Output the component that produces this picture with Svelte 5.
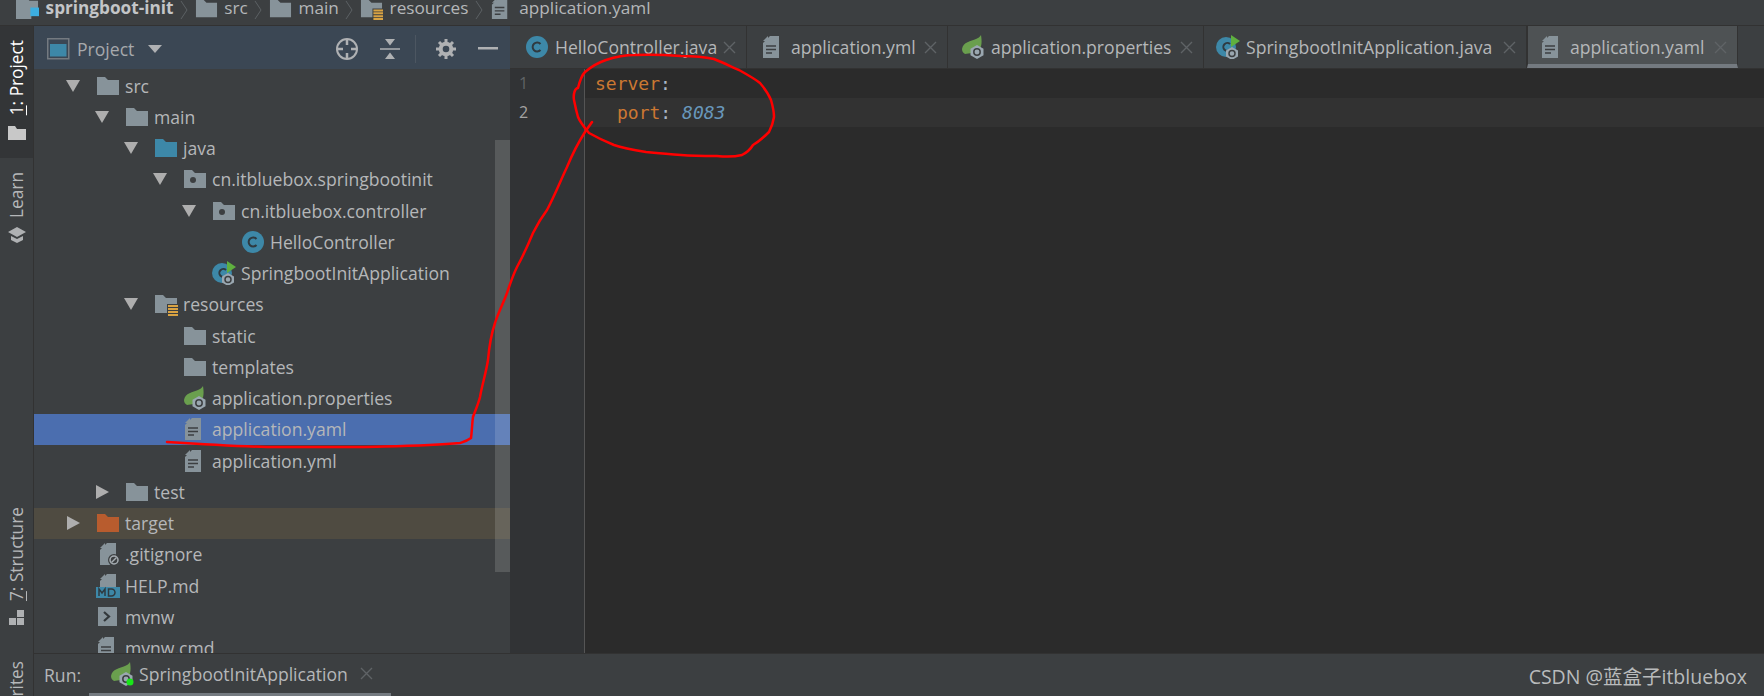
<script>
  const rows = [
    { label: 'src', depth: 0, arrow: 'down', icon: 'folder' },
    { label: 'main', depth: 1, arrow: 'down', icon: 'folder' },
    { label: 'java', depth: 2, arrow: 'down', icon: 'java' },
    { label: 'cn.itbluebox.springbootinit', depth: 3, arrow: 'down', icon: 'package' },
    { label: 'cn.itbluebox.controller', depth: 4, arrow: 'down', icon: 'package' },
    { label: 'HelloController', depth: 5, icon: 'class' },
    { label: 'SpringbootInitApplication', depth: 4, icon: 'boot' },
    { label: 'resources', depth: 2, arrow: 'down', icon: 'resources' },
    { label: 'static', depth: 3, icon: 'folder' },
    { label: 'templates', depth: 3, icon: 'folder' },
    { label: 'application.properties', depth: 3, icon: 'leaf' },
    { label: 'application.yaml', depth: 3, icon: 'file', state: 'selected' },
    { label: 'application.yml', depth: 3, icon: 'file' },
    { label: 'test', depth: 1, arrow: 'right', icon: 'folder' },
    { label: 'target', depth: 0, arrow: 'right', icon: 'target', state: 'excluded' },
    { label: '.gitignore', depth: 0, icon: 'ignore' },
    { label: 'HELP.md', depth: 0, icon: 'md' },
    { label: 'mvnw', depth: 0, icon: 'shell' },
    { label: 'mvnw.cmd', depth: 0, icon: 'file' }
  ];

  const tabs = [
    { label: 'HelloController.java', icon: 'class', width: 237, pad: 15 },
    { label: 'application.yml', icon: 'file', width: 201, pad: 14 },
    { label: 'application.properties', icon: 'leaf', width: 256, pad: 13 },
    { label: 'SpringbootInitApplication.java', icon: 'boot', width: 323, pad: 12 },
    { label: 'application.yaml', icon: 'file', width: 211, pad: 12, active: true }
  ];

  const crumbs = [
    { label: 'src', icon: 'folder' },
    { label: 'main', icon: 'folder' },
    { label: 'resources', icon: 'resources' },
    { label: 'application.yaml', icon: 'file' }
  ];
</script>

{#snippet icon(name)}
  <svg class="icon" width="24" height="24" viewBox="0 0 24 24">
    {#if name === 'folder' || name === 'java' || name === 'target' || name === 'package' || name === 'resources'}
      <path class={name} d="M1 3h8l3 3h11v15H1z" />
      {#if name === 'package'}<circle cx="10" cy="13" r="3" fill="#3c3f41" />{/if}
      {#if name === 'resources'}
        <rect x="13" y="12" width="11" height="12" fill="#3c3f41" />
        <path d="M14 14h10M14 17h10M14 20h10M14 23h10" stroke="#d9a343" stroke-width="2" />
      {/if}
    {:else if name === 'class'}
      <circle cx="12" cy="12" r="11" fill="#3d88a8" />
      <path d="M15.5 9a4.5 4.5 0 1 0 0 6" fill="none" stroke="#2f3a40" stroke-width="2" />
    {:else if name === 'boot'}
      <circle cx="10" cy="12" r="10" fill="#3d88a8" />
      <path d="M14 9a4 4 0 1 0 0 6" fill="none" stroke="#2f3a40" stroke-width="2" />
      <path d="M15 0l9 6-9 6z" fill="#5fb03f" />
      <path d="M16 12l6 3.5v6L16 25l-6-3.5v-6z" fill="#9aa7b0" />
      <circle cx="16" cy="18.5" r="3" fill="none" stroke="#3c3f41" stroke-width="1.5" />
    {:else if name === 'leaf' || name === 'leafrun'}
      <path d="M1 14C2 7 10 6 15 4c2-1 4-2 5-4 1 6 1 12-2 15-4 4-10 3-14 4-2-1-3-3-3-5z" fill="#6a9f4e" />
      <path d="M16 10l6.5 3.7v6.6L16 24l-6.500-3.700v-6.600z" fill="#9aa7b0" />
      <circle cx="16" cy="17" r="3.200" fill="none" stroke="#3c3f41" stroke-width="1.500" />
      {#if name === 'leafrun'}<circle cx="20" cy="20" r="3.500" fill="#19e619" />{/if}
    {:else if name === 'file'}
      <path d="M9 1h9v22H2V8z" fill="#87939a" />
      <path d="M2 6l5-5v5z" fill="#87939a" />
      <path d="M5 11h10M5 14.500h10M5 18h6" stroke="#3c3f41" stroke-width="1.500" />
    {:else if name === 'ignore'}
      <path d="M11 1h9v22H4V8z" fill="#87939a" />
      <path d="M4 6l5-5v5z" fill="#87939a" />
      <circle cx="18" cy="18" r="6" fill="#3c3f41" />
      <circle cx="18" cy="18" r="4" fill="none" stroke="#a6adb2" stroke-width="1.500" />
      <path d="M15.500 20.500l5-5" stroke="#a6adb2" stroke-width="1.500" />
    {:else if name === 'md'}
      <path d="M11 0h9v14H4V7z" fill="#87939a" />
      <path d="M4 5l5-5v5z" fill="#87939a" />
      <rect x="0" y="13" width="24" height="11" fill="#3d88a8" />
      <path d="M3 22v-7l3 4 3-4v7M12.500 15v7h3a3.500 3.500 0 0 0 0-7z" fill="none" stroke="#2f3a40" stroke-width="1.500" />
    {:else if name === 'shell'}
      <rect x="2" y="2" width="19" height="19" fill="#87939a" />
      <path d="M8 7l5 4.500L8 16" fill="none" stroke="#33383b" stroke-width="2.200" />
    {/if}
  </svg>
{/snippet}

{#snippet close()}
  <svg class="close" width="13" height="13" viewBox="0 0 13 13">
    <path d="M1 1l11 11M12 1L1 12" stroke="#5f6366" stroke-width="1.400" />
  </svg>
{/snippet}

<div class="app">
  <nav class="crumbs">
    <svg class="icon" width="24" height="24" viewBox="0 0 24 24">
      <path d="M0 0h11l3 4h9v14h-7v5H0z" fill="#87939a" />
      <rect x="15" y="11" width="9" height="9" fill="#3caee0" />
    </svg>
    <b>springboot-init</b>
    {#each crumbs as c}
      <svg class="chevron" width="8" height="20" viewBox="0 0 8 20"><path d="M1 1l6 9-6 9" fill="none" stroke="#5c6164" /></svg>
      {@render icon(c.icon)}
      <span>{c.label}</span>
    {/each}
  </nav>

  <div class="main">
    <aside class="strip">
      <div class="side active">
        <span class="vert"><u>1</u>: Project</span>
        <svg width="18" height="14" viewBox="0 0 18 14"><path d="M0 0h7l2 3h9v11H0z" fill="#c8c8c8" /></svg>
      </div>
      <div class="side learn">
        <span class="vert">Learn</span>
        <svg width="18" height="16" viewBox="0 0 18 16"><path d="M9 0l9 5-9 5-9-5zM3 9l6 3 6-3v4l-6 3-6-3z" fill="#afb1b3" /></svg>
      </div>
      <div class="side structure">
        <span class="vert"><u>7</u>: Structure</span>
        <svg width="16" height="15" viewBox="0 0 16 15"><path d="M8 0h7v7H8zM0 8h7v7H0zM8 8h7v7H8z" fill="#afb1b3" /></svg>
      </div>
      <div class="side favorites">
        <span class="vert"><u>2</u>: Favorites</span>
      </div>
    </aside>

    <div class="work">
      <div class="panes">
        <section class="project">
          <header>
            <svg class="window" width="24" height="22" viewBox="0 0 24 22">
              <rect x="0.750" y="0.750" width="21" height="20" fill="none" stroke="#747a80" stroke-width="1.500" />
              <rect x="3" y="6" width="16.500" height="12.500" fill="#3d88a8" />
            </svg>
            <span class="title">Project</span>
            <svg width="14" height="8" viewBox="0 0 14 8"><path d="M0 0h14L7 8z" fill="#afb1b3" /></svg>
            <svg class="locate" width="24" height="24" viewBox="0 0 24 24">
              <circle cx="12" cy="12" r="10" fill="none" stroke="#afb1b3" stroke-width="2" />
              <path d="M12 2v6M12 16v6M2 12h6M16 12h6" stroke="#afb1b3" stroke-width="2.500" />
            </svg>
            <svg class="collapse" width="20" height="20" viewBox="0 0 20 20">
              <path d="M0 10h20" stroke="#afb1b3" stroke-width="1.500" />
              <path d="M5 0h10l-5 6.500zM5 20h10l-5-6.500z" fill="#afb1b3" />
            </svg>
            <i class="sep"></i>
            <svg class="gear" width="20" height="20" viewBox="0 0 20 20">
              <circle cx="10" cy="10" r="5.300" fill="none" stroke="#afb1b3" stroke-width="4" />
              <path d="M10 0v20M0 10h20M3 3l14 14M17 3L3 17" stroke="#afb1b3" stroke-width="3" stroke-dasharray="3.500 13" />
            </svg>
            <svg class="hide" width="20" height="3" viewBox="0 0 20 3"><rect width="20" height="2.500" fill="#afb1b3" /></svg>
          </header>
          <div class="tree">
            {#each rows as r}
              <div class="row {r.state ?? ''}" style="padding-left: {32 + r.depth * 29}px">
                <span class="arrow">
                  {#if r.arrow === 'down'}
                    <svg width="14" height="12" viewBox="0 0 14 12"><path d="M0 0h14L7 12z" fill="#aeaeae" /></svg>
                  {:else if r.arrow === 'right'}
                    <svg width="13" height="14" viewBox="0 0 13 14"><path d="M0 0l13 7-13 7z" fill="#aeaeae" /></svg>
                  {/if}
                </span>
                {@render icon(r.icon)}
                <span class="label">{r.label}</span>
              </div>
            {/each}
          </div>
          <div class="scrollbar"></div>
        </section>

        <section class="editor">
          <div class="tabs">
            {#each tabs as t}
              <div class="tab" class:active={t.active} style="width: {t.width}px; padding-left: {t.pad}px">
                {@render icon(t.icon)}
                <span class="label">{t.label}</span>
                {@render close()}
              </div>
            {/each}
          </div>
          <div class="code">
            <div class="gutter">
              <div>1</div>
              <div class="current">2</div>
            </div>
            <div class="lines">
              <div class="line"><span class="key">server</span>:</div>
              <div class="line caret"><span class="key">port</span>: <em>8083</em></div>
            </div>
          </div>
        </section>
      </div>

      <footer class="runbar">
        <span class="run">Run:</span>
        <div class="runtab">
          {@render icon('leafrun')}
          <span class="label">SpringbootInitApplication</span>
          {@render close()}
        </div>
        <span class="mark">CSDN @蓝盒子itbluebox</span>
      </footer>
    </div>
  </div>

  <!-- hand drawn red annotation over the screenshot -->
  <svg class="ink" width="1764" height="696" viewBox="0 0 1764 696">
    <path d="M574 100C573 94 575 88 578 88C580 80 583 74 585 72C592 66 600 62 606 60C618 56 626 55 635 55C655 54 668 55 681 56C695 56 705 57 714 59C724 63 732 67 739 70C748 75 755 79 760 83C766 90 769 95 771 100C773 107 774 112 774 117C773 124 771 128 769 132C763 138 758 142 753 145C750 150 746 153 742 155C734 157 726 157 717 156C705 156 693 156 681 155C668 154 657 153 646 152C634 150 623 148 614 145C604 141 596 137 589 133C584 127 580 122 578 117C576 110 575 105 574 100" />
    <path d="M592 122L585 132C578 143 572 155 567 167C560 182 554 197 547 210C541 218 537 225 533 233C528 245 523 256 517 267C513 275 510 284 507 293C503 304 498 313 495 323C491 335 489 348 488 360C486 373 482 385 480 397C478 405 475 411 473 417C472 424 472 431 471 438C467 441 463 442 460 443C430 446 400 446 360 447C320 447 290 447 267 447C230 446 198 444 167 442" />
  </svg>
</div>

<style>
  :global(body) { margin: 0; background: #3c3f41; }

  .app {
    position: relative;
    width: 1764px;
    height: 696px;
    overflow: hidden;
    display: flex;
    flex-direction: column;
    background: #3c3f41;
    color: #b5b7b9;
    font-family: "Open Sans", "Noto Sans", "Noto Sans CJK SC", sans-serif;
    font-size: 17.6px;
  }

  svg { display: block; flex: none; }

  /* icon fills */
  .folder, .package, .resources { fill: #87939a; }
  .java { fill: #3d88a8; }
  .target { fill: #b85c2e; }

  .crumbs {
    height: 26px;
    flex: none;
    box-sizing: border-box;
    border-bottom: 1px solid #323232;
    display: flex;
    align-items: flex-end;
    padding: 0 0 8px 16px;
    gap: 6.6px;
    font-size: 17.2px;
    line-height: 19px;
    overflow: hidden;
    white-space: nowrap;
  }
  .crumbs b { color: #c3c5c7; font-weight: 700; }
  .crumbs .icon { width: 23px; height: 23px; margin-bottom: -3px; }
  .crumbs .chevron { margin-bottom: -3px; }

  .main { flex: 1; display: flex; min-height: 0; }

  .strip {
    width: 33px;
    flex: none;
    border-right: 1px solid #323232;
    overflow: hidden;
  }
  .side {
    display: flex;
    flex-direction: column;
    align-items: center;
    gap: 9px;
    line-height: 20px;
  }
  .vert {
    writing-mode: vertical-rl;
    transform: rotate(180deg);
    white-space: nowrap;
    font-size: 17.3px;
  }
  .side.active { height: 132px; box-sizing: border-box; padding-top: 14px; gap: 11px; background: #333537; color: #fff; }
  .side.learn { margin-top: 14px; }
  .side.structure { margin-top: 264px; }
  .side.favorites { margin-top: 36px; }

  .work { flex: 1; display: flex; flex-direction: column; min-width: 0; }
  .panes { flex: 1; display: flex; min-height: 0; }

  .project {
    position: relative;
    width: 476px;
    flex: none;
    display: flex;
    flex-direction: column;
    overflow: hidden;
  }
  .project header {
    height: 43px;
    flex: none;
    box-sizing: border-box;
    padding: 2px 0 0 13px;
    background: #3b4754;
    display: flex;
    align-items: center;
  }
  .title { margin: 0 14px 0 6px; color: #a6a9ac; }
  .locate { margin-left: 173px; }
  .collapse { margin-left: 21px; }
  .sep { width: 1px; height: 28px; background: #4c5661; margin-left: 15px; }
  .gear { margin-left: 20px; }
  .hide { margin-left: 22px; }

  .tree { padding-top: 1px; }
  .row {
    height: 31.25px;
    display: flex;
    align-items: center;
    white-space: nowrap;
  }
  .row.selected { background: #4b6eaf; }
  .row.excluded { background: #4f4b41; }
  .arrow { width: 14px; margin-right: 16px; flex: none; display: flex; justify-content: center; }
  .row .icon { margin-right: 5px; }

  .scrollbar {
    position: absolute;
    top: 114px;
    right: 0;
    width: 15px;
    height: 432px;
    background: rgba(255, 255, 255, 0.14);
  }

  .editor { flex: 1; display: flex; flex-direction: column; min-width: 0; }
  .tabs {
    height: 43px;
    flex: none;
    display: flex;
    border-bottom: 1px solid #323232;
    box-sizing: border-box;
  }
  .tab {
    box-sizing: border-box;
    display: flex;
    align-items: center;
    gap: 6px;
    border-right: 1px solid #323232;
    white-space: nowrap;
  }
  .tab .label { flex: 1; }
  .tab .close { margin-right: 10px; }
  .tab.active { background: #4e5254; padding-top: 4px; border-bottom: 4px solid #747a80; border-left: 1px solid #323232; }

  .code { flex: 1; display: flex; background: #2b2b2b; font-family: "DejaVu Sans Mono", monospace; font-size: 18px; line-height: 29px; }
  .gutter {
    width: 75px;
    flex: none;
    box-sizing: border-box;
    padding-left: 9px;
    background: #313335;
    border-right: 1px solid #555;
    color: #606366;
    font-family: "Open Sans", sans-serif;
    font-size: 16px;
  }
  .gutter .current { color: #a4a3a3; }
  .lines { flex: 1; }
  .line { height: 29px; padding-left: 10px; color: #a9b7c6; white-space: pre; }
  .line.caret { background: #323232; padding-left: 32px; }
  .key { color: #cc7832; }
  em { color: #6897bb; font-style: italic; }

  .runbar {
    height: 43px;
    flex: none;
    box-sizing: border-box;
    border-top: 1px solid #323232;
    display: flex;
    align-items: center;
    padding-left: 10px;
  }
  .run { width: 45px; }
  .runtab {
    width: 302px;
    height: 42px;
    box-sizing: border-box;
    display: flex;
    align-items: center;
    gap: 5px;
    padding-left: 21px;
    border-bottom: 3px solid #747a80;
  }
  .runtab .close { margin-left: 7px; }
  .mark { margin-left: auto; padding-right: 17px; font-size: 19.5px; color: #b9bbbc; }

  .ink { position: absolute; left: 0; top: 0; pointer-events: none; fill: none; stroke: #f00; stroke-width: 2.5; stroke-linejoin: round; stroke-linecap: round; }
</style>
